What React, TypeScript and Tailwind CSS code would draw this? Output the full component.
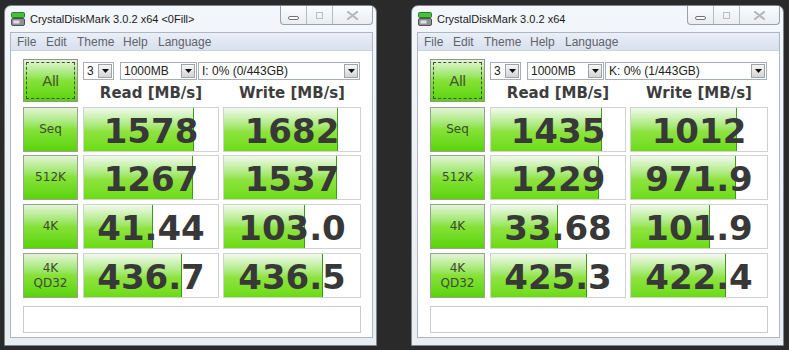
import React from 'react'

type Row = {
  label: string[]
  read: string
  readFill: number
  write: string
  writeFill: number
}

const leftRows: Row[] = [
  { label: ['Seq'], read: '1578', readFill: 110, write: '1682', writeFill: 114 },
  { label: ['512K'], read: '1267', readFill: 109, write: '1537', writeFill: 113 },
  { label: ['4K'], read: '41.44', readFill: 69, write: '103.0', writeFill: 81 },
  { label: ['4K', 'QD32'], read: '436.7', readFill: 98, write: '436.5', writeFill: 99 },
]

const rightRows: Row[] = [
  { label: ['Seq'], read: '1435', readFill: 111, write: '1012', writeFill: 106 },
  { label: ['512K'], read: '1229', readFill: 108, write: '971.9', writeFill: 105 },
  { label: ['4K'], read: '33.68', readFill: 67, write: '101.9', writeFill: 79 },
  { label: ['4K', 'QD32'], read: '425.3', readFill: 96, write: '422.4', writeFill: 95 },
]

const rowGaps = ['', 'mt-[3px]', 'mt-[4px]', 'mt-[4px]']

function Arrow() {
  return (
    <svg width="7" height="4" viewBox="0 0 7 4">
      <path d="M0 0h7L3.5 4z" fill="#111" />
    </svg>
  )
}

function Combo({ text, width }: { text: string; width: string }) {
  return (
    <div className={`${width} h-[18px] flex items-stretch border border-[#a7adb5] bg-white`}>
      <div className="flex-1 flex items-center pl-[3px] text-[12px] text-[#222] font-['Liberation_Sans',sans-serif] leading-none whitespace-nowrap overflow-hidden">
        {text}
      </div>
      <div className="w-[14px] m-[1px] flex items-center justify-center border border-[#9ea3a8] bg-gradient-to-b from-[#f6f6f6] to-[#d4d4d4]">
        <Arrow />
      </div>
    </div>
  )
}

function ValueBox({ value, fill, width }: { value: string; fill: number; width: string }) {
  return (
    <div className={`${width} h-full relative border border-[#cfd1d3] bg-white overflow-hidden`}>
      <div
        className="absolute left-0 top-0 bottom-0 border-r border-[#3f9a1c] bg-linear-to-b from-[#f2f9ec] via-[#8ee33e] via-55% to-[#6bdc10]"
        style={{ width: fill }}
      />
      <div className="relative h-full flex items-center justify-center pt-[2px] font-['DejaVu_Sans',sans-serif] font-bold text-[34px] leading-none text-[#383838]">
        {value}
      </div>
    </div>
  )
}

function Window({ title, drive, rows }: { title: string; drive: string; rows: Row[] }) {
  return (
    <div className="w-[373px] h-[341px] shrink-0 flex flex-col border border-[#7f868e] rounded-t-[7px] bg-gradient-to-b from-[#f3f6fa] to-[#e8edf2]">
      {/* title bar */}
      <div className="h-[26px] flex items-start">
        <div className="ml-[6px] mt-[6px] flex items-center">
          <svg width="14" height="14" viewBox="0 0 14 14">
            <rect x="0.5" y="0.5" width="13" height="5" rx="1" fill="#44c23a" stroke="#2b7d2b" />
            <rect x="0.5" y="6.5" width="13" height="7" rx="1.5" fill="#8e9296" stroke="#4e5255" />
            <rect x="2.5" y="8.5" width="6" height="3" fill="#dfe2e4" />
          </svg>
          <span className="ml-[5px] text-[11px] text-[#1a1a1a] font-['Liberation_Sans',sans-serif] leading-none whitespace-nowrap">
            {title}
          </span>
        </div>
        <div className="ml-auto mr-[3px] h-[19px] flex border border-t-0 border-[#9aa1a9] rounded-b-[4px] bg-gradient-to-b from-[#fbfcfd] to-[#e9edf1]">
          <div className="w-[25px] flex items-center justify-center pt-[5px]">
            <div className="w-[11px] h-[4px] rounded-[2px] border border-[#6d7278] bg-white" />
          </div>
          <div className="w-[26px] flex items-center justify-center border-l border-[#b5bbc2]">
            <div className="w-[7px] h-[7px] border border-[#b9bec4]" />
          </div>
          <div className="w-[40px] flex items-center justify-center border-l border-[#b5bbc2]">
            <svg width="11" height="9" viewBox="0 0 11 9">
              <path d="M1 1l9 7M10 1L1 8" stroke="#b3b8be" strokeWidth="2.2" strokeLinecap="round" />
            </svg>
          </div>
        </div>
      </div>

      {/* client area */}
      <div className="ml-[5px] mr-[3px] mb-[7px] flex-1 flex flex-col border border-[#aeb6c1] bg-white">
        <div className="h-[18px] flex items-center pl-[6px] bg-gradient-to-b from-[#eaeff8] to-[#d8e0ee] border-b border-[#cbd3df] text-[12px] text-[#5f6368] font-['Liberation_Sans',sans-serif] leading-none">
          <span className="w-[29px]">File</span>
          <span className="w-[31px]">Edit</span>
          <span className="w-[46px]">Theme</span>
          <span className="w-[35px]">Help</span>
          <span>Language</span>
        </div>

        <div className="pl-[12px] pt-[8px] flex flex-col">
          {/* top section */}
          <div className="flex">
            <div className="w-[55px] h-[43px] p-[2px] border border-[#8f968f] bg-linear-to-b from-[#e3f4d4] via-[#86e236] via-50% to-[#58d400]">
              <div className="h-full flex items-center justify-center border border-dashed border-[#4a4a4a] text-[15px] text-[#44552f] font-['Liberation_Sans',sans-serif] leading-none">
                All
              </div>
            </div>
            <div className="ml-[5px] w-[278px] flex flex-col">
              <div className="mt-[3px] flex">
                <Combo text="3" width="w-[31px]" />
                <div className="ml-[6px]">
                  <Combo text="1000MB" width="w-[77px]" />
                </div>
                <div className="ml-[1px]">
                  <Combo text={drive} width="w-[162px]" />
                </div>
              </div>
              <div className="h-[22px] flex items-end pb-[1px] font-['DejaVu_Sans',sans-serif] font-bold text-[15px] text-[#3d3d3d] leading-none">
                <div className="w-[136px] text-center">Read [MB/s]</div>
                <div className="ml-[4px] w-[138px] text-center">Write [MB/s]</div>
              </div>
            </div>
          </div>

          {/* result rows */}
          <div className="mt-[5px] flex flex-col">
            {rows.map((r, i) => (
              <div key={i} className={`h-[45px] flex ${rowGaps[i]}`}>
                <div className="w-[55px] h-full flex flex-col items-center justify-center border border-[#9aa09a] bg-linear-to-b from-[#e3f4d4] via-[#86e236] via-50% to-[#58d400] text-[12px] text-[#3e4a35] font-['DejaVu_Sans',sans-serif] leading-[15px]">
                  {r.label.map((l) => (
                    <span key={l}>{l}</span>
                  ))}
                </div>
                <div className="ml-[5px] h-full">
                  <ValueBox value={r.read} fill={r.readFill} width="w-[136px]" />
                </div>
                <div className="ml-[4px] h-full">
                  <ValueBox value={r.write} fill={r.writeFill} width="w-[138px]" />
                </div>
              </div>
            ))}
          </div>

          <div className="mt-[8px] w-[338px] h-[27px] border border-[#c9cbcd] bg-white" />
        </div>
      </div>
    </div>
  )
}

export default function App() {
  return (
    <div className="w-[789px] h-[350px] bg-[#2a2a2a] flex items-start pl-[4px] pt-[5px] gap-[34px] overflow-hidden">
      <Window title="CrystalDiskMark 3.0.2 x64 <0Fill>" drive="I: 0% (0/443GB)" rows={leftRows} />
      <Window title="CrystalDiskMark 3.0.2 x64" drive="K: 0% (1/443GB)" rows={rightRows} />
    </div>
  )
}
